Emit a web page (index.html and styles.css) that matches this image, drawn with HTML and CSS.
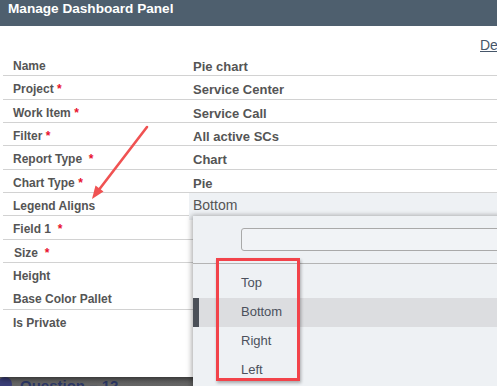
FILE: index.html
```html
<!DOCTYPE html>
<html lang="en">
<head>
<meta charset="UTF-8">
<title>Manage Dashboard Panel</title>
<link rel="stylesheet" href="styles.css">
</head>
<body>
    <div class="dialog">
        <div class="dialog-header">Manage Dashboard Panel</div>
        <div class="toolbar"><a href="#" class="toolbar-link">Delete</a></div>

        <div class="fields">
            <div class="field"><div class="label">Name</div><div class="value">Pie chart</div></div>
            <div class="field"><div class="label">Project <span class="req">*</span></div><div class="value">Service Center</div></div>
            <div class="field"><div class="label">Work Item <span class="req">*</span></div><div class="value">Service Call</div></div>
            <div class="field"><div class="label">Filter <span class="req">*</span></div><div class="value">All active SCs</div></div>
            <div class="field"><div class="label">Report Type &nbsp;<span class="req">*</span></div><div class="value">Chart</div></div>
            <div class="field"><div class="label">Chart Type <span class="req">*</span></div><div class="value">Pie</div></div>
            <div class="field">
                <div class="label">Legend Aligns</div>
                <div class="value select-open">
                    <span class="select-text">Bottom</span>
                    <div class="dropdown">
                        <div class="dropdown-search"><input type="text" class="search-box"></div>
                        <ul class="options">
                            <li class="option">Top</li>
                            <li class="option option-active">Bottom</li>
                            <li class="option">Right</li>
                            <li class="option">Left</li>
                        </ul>
                    </div>
                </div>
            </div>
            <div class="field"><div class="label">Field 1 &nbsp;<span class="req">*</span></div><div class="value"></div></div>
            <div class="field"><div class="label size-label">Size &nbsp;<span class="req">*</span></div><div class="value"></div></div>
            <div class="field no-line"><div class="label">Height</div><div class="value"></div></div>
            <div class="field"><div class="label">Base Color Pallet</div><div class="value"></div></div>
            <div class="field no-line"><div class="label">Is Private</div><div class="value"></div></div>
        </div>
    </div>

    <div class="question"><span class="question-dot"></span>Question &ndash; 12</div>

    <!-- annotations drawn over the screenshot -->
    <svg class="note-arrow" width="497" height="386" viewBox="0 0 497 386">
        <line x1="147" y1="127" x2="98" y2="191" stroke="#f05252" stroke-width="2.6" stroke-linecap="round"/>
        <polygon points="92,199 95.5,185.5 103.5,191.5" fill="#f05252"/>
    </svg>
    <div class="note-box"></div>
</body>
</html>
```

FILE: styles.css
```css
body {
    margin: 0;
    padding: 0;
    background: linear-gradient(#4a4a4a, #666);
    font-family: "Liberation Sans", Arial, sans-serif;
    overflow: hidden;
    height: 386px;
    position: relative;
}

.dialog {
    background: #fff;
    height: 377px;
    box-shadow: 0 2px 6px rgba(0,0,0,0.55);
    position: relative;
    z-index: 1;
}

.dialog-header {
    height: 26px;
    box-sizing: border-box;
    background-color: #4e5f6e;
    color: #fff;
    font-weight: bold;
    font-size: 13.6px;
    padding: 1px 0 0 8px;
}

.toolbar {
    height: 27px;
    box-sizing: border-box;
    padding: 11px 0 0 480px;
    white-space: nowrap;
    font-size: 14px;
}
.toolbar-link {
    color: #46566a;
    text-decoration: underline;
}

.fields {
    margin-left: 3px;
}
.field {
    display: grid;
    grid-template-columns: 190px 1fr;
    height: 22.33px;
    border-bottom: 1px solid #d2d2d2;
    line-height: 27px;
    color: #555;
}
.field.no-line {
    border-bottom-color: transparent;
}
.label {
    padding-left: 10px;
    font-size: 12px;
    font-weight: bold;
}
.size-label {
    padding-left: 11px;
}
.req {
    color: #e8112d;
}
.value {
    font-size: 13px;
    font-weight: bold;
    white-space: nowrap;
}

.select-open {
    position: relative;
    margin-left: -4px;
    padding-left: 4px;
    background-color: #eef1f4;
    font-size: 14px;
    font-weight: normal;
    line-height: 25px;
    z-index: 2;
}

.dropdown {
    position: absolute;
    top: 23px;
    left: 4px;
    width: 320px;
    height: 175px;
    background-color: #eef1f4;
    box-shadow: -2px 0 5px rgba(0,0,0,0.25), 0 -2px 4px rgba(0,0,0,0.08);
}
.dropdown-search {
    height: 23px;
    padding: 12px 0 12px 48px;
    border-bottom: 1px solid #b4b4b4;
}
.search-box {
    display: block;
    width: 300px;
    height: 23px;
    box-sizing: border-box;
    margin: 0;
    border: 1px solid #a9a9a9;
    border-radius: 3px;
    background-color: #f1f3f6;
}
.options {
    list-style: none;
    margin: 0;
    padding: 5px 0 0 0;
}
.option {
    height: 29px;
    line-height: 28px;
    padding-left: 48px;
    font-size: 13px;
    color: #4b505c;
}
.option-active {
    background-color: #dcdde0;
    border-left: 6px solid #4b5058;
    padding-left: 42px;
}

.question {
    height: 20px;
    padding: 0 0 0 20px;
    margin-top: -1px;
    font-size: 15px;
    font-weight: bold;
    color: #2c3866;
    line-height: 20px;
    position: relative;
}
.question-dot {
    position: absolute;
    left: -2px;
    top: 1px;
    width: 14px;
    height: 14px;
    border-radius: 50%;
    background-color: #3a3e78;
}

.note-arrow {
    position: absolute;
    left: 0;
    top: 0;
    z-index: 5;
    pointer-events: none;
}
.note-box {
    position: absolute;
    left: 216px;
    top: 258px;
    width: 78px;
    height: 117px;
    border: 3px solid #f2434a;
    box-shadow: 1px 2px 3px rgba(0,0,0,0.3);
    z-index: 5;
}
```
